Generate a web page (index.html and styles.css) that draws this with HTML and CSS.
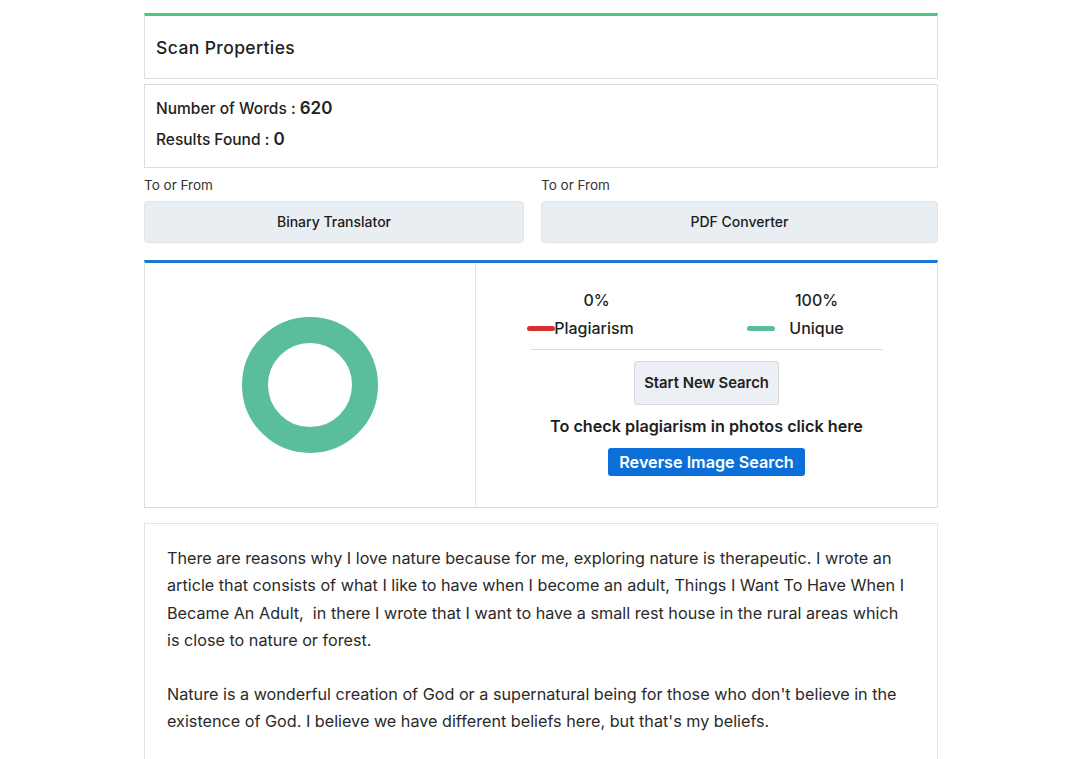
FILE: index.html
```html
<html>
  <head>
    <meta name="viewport" content="width=device-width, initial-scale=1.0" />
    <link rel="stylesheet" href="styles.css">
  </head>
  <body>
    <div class="wrap">
      <div class="card card-green">
        <h3 class="card-title">Scan Properties</h3>
      </div>
      <div class="card stats">
        <div class="stat">Number of Words : <b>620</b></div>
        <div class="stat">Results Found : <b>0</b></div>
      </div>
      <div class="tools">
        <div class="tool">
          <div class="tool-label">To or From</div>
          <a class="tool-btn">Binary Translator</a>
        </div>
        <div class="tool">
          <div class="tool-label">To or From</div>
          <a class="tool-btn">PDF Converter</a>
        </div>
      </div>
      <div class="card card-blue result">
        <div class="chart-col">
          <div class="donut"></div>
        </div>
        <div class="info-col">
          <div class="legend">
            <div class="legend-item">
              <div class="pct">0%</div>
              <div class="legend-name"><span class="key key-red">Plagiarism</span></div>
            </div>
            <div class="legend-item">
              <div class="pct">100%</div>
              <div class="legend-name"><span class="key key-green">Unique</span></div>
            </div>
          </div>
          <hr class="sep">
          <button class="btn-light">Start New Search</button>
          <p class="photo-note">To check plagiarism in photos click here</p>
          <button class="btn-blue">Reverse Image Search</button>
        </div>
      </div>
      <div class="card text-card">
        <p>There are reasons why I love nature because for me, exploring nature is therapeutic. I wrote an article that consists of what I like to have when I become an adult, Things I Want To Have When I Became An Adult,&nbsp; in there I wrote that I want to have a small rest house in the rural areas which is close to nature or forest.</p>
        <p>Nature is a wonderful creation of God or a supernatural being for those who don't believe in the existence of God. I believe we have different beliefs here, but that's my beliefs.</p>
      </div>
    </div>
  </body>
</html>
```

FILE: styles.css
```css
body {
  margin: 0;
  background: #fff;
  font-family: Inter, "DejaVu Sans", sans-serif;
  color: #212529;
}
.wrap {
  width: 794px;
  margin: 0 0 0 144px;
  padding-top: 13px;
}
.card {
  border: 1px solid #dedede;
  background: #fff;
}
.card-green {
  border-top: 3px solid #4cc483;
  height: 62px;
  display: flex;
  align-items: center;
}
.card-title {
  margin: 0;
  padding: 0 11px;
  font-size: 17.5px;
  letter-spacing: 0.4px;
  font-weight: 500;
  color: #222;
}
.stats {
  margin-top: 5px;
  padding: 8px 11px 20px;
  height: 54px;
}
.stat {
  font-size: 15.5px;
  font-weight: 500;
  line-height: 30px;
  color: #222;
}
.stat b {
  font-size: 17px;
  font-weight: 600;
}
.tools {
  display: flex;
  gap: 17px;
  margin-top: 9px;
}
.tool {
  flex: 0 0 380px;
}
.tool + .tool {
  flex: 1;
}
.tool-label {
  font-size: 13.5px;
  color: #333;
  line-height: 16px;
}
.tool-btn {
  display: block;
  margin-top: 8px;
  height: 40px;
  line-height: 40px;
  text-align: center;
  background: #e9eef2;
  border: 1px solid #dfe4e8;
  border-radius: 4px;
  font-size: 14px;
  font-weight: 500;
  color: #1c1c1c;
}
.result {
  margin-top: 17px;
  border-top: 3px solid #1a78d2;
  display: flex;
  height: 244px;
}
.chart-col {
  width: 330px;
  border-right: 1px solid #e6e6e6;
  display: flex;
  align-items: center;
  justify-content: center;
}
.donut {
  width: 84px;
  height: 84px;
  border-radius: 50%;
  border: 26px solid #5abd9d;
}
.info-col {
  flex: 1;
  display: flex;
  flex-direction: column;
  align-items: center;
  padding-top: 24px;
}
.legend {
  display: flex;
  width: 440px;
}
.legend-item {
  flex: 1;
  text-align: center;
  font-size: 16px;
  font-weight: 500;
  color: #1f1f1f;
}
.pct {
  line-height: 26px;
}
.legend-name {
  line-height: 30px;
}
.key {
  position: relative;
}
.key::before {
  content: "";
  position: absolute;
  top: 8px;
  width: 28px;
  height: 5px;
  border-radius: 3px;
}
.key-red {
  margin-left: -5px;
}
.key-red::before {
  left: -27px;
  background: #d5302f;
}
.key-green::before {
  left: -42px;
  background: #5abd9d;
}
.sep {
  width: 352px;
  border: 0;
  border-top: 1px solid #dadde0;
  margin: 6px 0 11px;
}
.btn-light {
  font-family: inherit;
  font-size: 14.8px;
  font-weight: 600;
  color: #222;
  background: #eceff3;
  border: 1px solid #d6dadf;
  border-radius: 3px;
  height: 44px;
  padding: 0 9px;
}
.photo-note {
  margin: 12px 0 0;
  font-size: 16.2px;
  font-weight: 600;
  color: #1f1f1f;
  line-height: 18px;
}
.btn-blue {
  margin-top: 13px;
  font-family: inherit;
  font-size: 16.2px;
  font-weight: 600;
  color: #fff;
  background: #0c6fd8;
  border: 0;
  border-radius: 3px;
  height: 28px;
  padding: 0 11px;
}
.text-card {
  margin-top: 15px;
  padding: 21px 22px 10px 22px;
  border-color: #e4e4e4;
}
.text-card p {
  margin: 0 0 27px;
  font-size: 16.2px;
  line-height: 27.3px;
  color: #2a2a2a;
}
```
